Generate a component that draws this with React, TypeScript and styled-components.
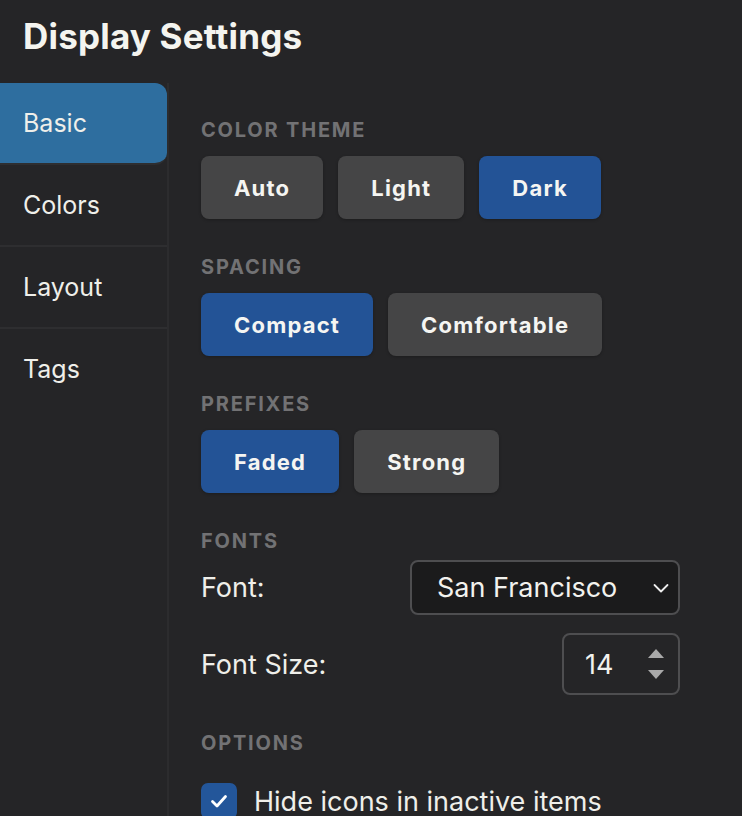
import styled, { createGlobalStyle } from "styled-components";

const GlobalStyle = createGlobalStyle`
  body {
    margin: 0;
    background: #252527;
    font-family: Inter, "Noto Sans", sans-serif;
    color: #f2f2f0;
  }
`;

const sections = [
  { label: "Color Theme", options: ["Auto", "Light", "Dark"], active: "Dark" },
  { label: "Spacing", options: ["Compact", "Comfortable"], active: "Compact" },
  { label: "Prefixes", options: ["Faded", "Strong"], active: "Faded" },
];

const tabs = ["Basic", "Colors", "Layout", "Tags"];

const ChevronDown = () => (
  <svg width="20" height="20" viewBox="0 0 20 20" fill="none">
    <path d="M3.5 7 10 13.5 16.5 7" stroke="#eee" strokeWidth="1.8" strokeLinecap="round" strokeLinejoin="round" />
  </svg>
);

const Check = () => (
  <svg width="22" height="22" viewBox="0 0 22 22" fill="none">
    <path d="M4.5 11.5 9 16l8.5-9.5" stroke="#fff" strokeWidth="2.8" strokeLinecap="round" strokeLinejoin="round" />
  </svg>
);

export default function App() {
  return (
    <Page>
      <GlobalStyle />
      <Title>Display Settings</Title>
      <Body>
        <Sidebar>
          {tabs.map((t) => (
            <Tab key={t} $active={t === "Basic"}>
              {t}
            </Tab>
          ))}
        </Sidebar>
        <Content>
          {sections.map((s) => (
            <Section key={s.label}>
              <SectionLabel>{s.label}</SectionLabel>
              <ButtonGroup>
                {s.options.map((o) => (
                  <ToggleButton key={o} $active={o === s.active}>
                    {o}
                  </ToggleButton>
                ))}
              </ButtonGroup>
            </Section>
          ))}
          <Section>
            <SectionLabel>Fonts</SectionLabel>
            <FieldRow>
              <FieldLabel>Font:</FieldLabel>
              <Select>
                <span>San Francisco</span>
                <ChevronDown />
              </Select>
            </FieldRow>
            <FieldRow $gap={18}>
              <FieldLabel>Font Size:</FieldLabel>
              <NumberBox>
                <span>14</span>
                <Spinner>
                  <Arrow $up />
                  <Arrow />
                </Spinner>
              </NumberBox>
            </FieldRow>
          </Section>
          <Section>
            <SectionLabel>Options</SectionLabel>
            <CheckRow>
              <CheckBox>
                <Check />
              </CheckBox>
              Hide icons in inactive items
            </CheckRow>
          </Section>
        </Content>
      </Body>
    </Page>
  );
}

const Page = styled.div`
  height: 816px;
  overflow: hidden;
`;

const Title = styled.h1`
  margin: 0;
  padding: 14px 23px 0;
  height: 83px;
  box-sizing: border-box;
  font-size: 35px;
  font-weight: 700;
  letter-spacing: 0.2px;
  line-height: 44px;
  color: #f4f4ef;
`;

const Body = styled.div`
  display: flex;
  align-items: stretch;
  min-height: 800px;
`;

const Sidebar = styled.nav`
  width: 167px;
  flex-shrink: 0;
  border-right: 2px solid #2c2c2e;
  display: flex;
  flex-direction: column;
`;

const Tab = styled.div<{ $active?: boolean }>`
  height: 80px;
  display: flex;
  align-items: center;
  padding-left: 23px;
  font-size: 25px;
  color: #efefea;
  background: ${({ $active }) => ($active ? "#2e6e9f" : "transparent")};
  border-radius: ${({ $active }) => ($active ? "0 12px 12px 0" : "0")};
  border-bottom: 2px solid #2e2e30;
  &:last-child {
    border-bottom: none;
  }
`;

const Content = styled.main`
  flex: 1;
  padding: 35px 0 0 32px;
  display: flex;
  flex-direction: column;
  gap: 36px;
`;

const Section = styled.section`
  display: flex;
  flex-direction: column;
`;

const SectionLabel = styled.div`
  font-size: 20px;
  line-height: 24px;
  font-weight: 700;
  letter-spacing: 1.8px;
  text-transform: uppercase;
  color: #727274;
  margin-bottom: 14px;
`;

const ButtonGroup = styled.div`
  display: flex;
  gap: 15px;
`;

const ToggleButton = styled.button<{ $active?: boolean }>`
  height: 63px;
  padding: 0 33px;
  border: none;
  border-radius: 8px;
  background: ${({ $active }) => ($active ? "#235396" : "#454546")};
  color: #f5f5f2;
  font-family: inherit;
  font-size: 22px;
  letter-spacing: 1.2px;
  font-weight: 700;
  box-shadow: 0 1px 3px rgba(0, 0, 0, 0.25);
`;

const FieldRow = styled.div<{ $gap?: number }>`
  width: 479px;
  display: flex;
  align-items: center;
  justify-content: space-between;
  margin-top: ${({ $gap }) => ($gap ? `${$gap}px` : "-7px")};
`;

const FieldLabel = styled.span`
  font-size: 27px;
  color: #efefea;
`;

const Select = styled.div`
  width: 270px;
  height: 55px;
  box-sizing: border-box;
  border: 2px solid #4e4e50;
  border-radius: 8px;
  background: #1b1b1c;
  display: flex;
  align-items: center;
  justify-content: space-between;
  padding: 0 7px 0 25px;
  font-size: 27px;
  color: #f2f2ee;
`;

const NumberBox = styled.div`
  width: 118px;
  height: 62px;
  box-sizing: border-box;
  border: 2px solid #4e4e50;
  border-radius: 8px;
  display: flex;
  align-items: center;
  justify-content: space-between;
  padding: 0 14px 0 21px;
  font-size: 27px;
  color: #f2f2ee;
`;

const Spinner = styled.div`
  display: flex;
  flex-direction: column;
  gap: 12px;
`;

const Arrow = styled.span<{ $up?: boolean }>`
  width: 0;
  height: 0;
  border-left: 8px solid transparent;
  border-right: 8px solid transparent;
  ${({ $up }) =>
    $up ? "border-bottom: 9px solid #a9a9a9;" : "border-top: 9px solid #a9a9a9;"}
`;

const CheckRow = styled.label`
  display: flex;
  align-items: center;
  gap: 17px;
  margin-top: 14px;
  font-size: 27px;
  color: #efefea;
`;

const CheckBox = styled.span`
  width: 36px;
  height: 36px;
  border-radius: 7px;
  background: #23569a;
  display: flex;
  align-items: center;
  justify-content: center;
`;
